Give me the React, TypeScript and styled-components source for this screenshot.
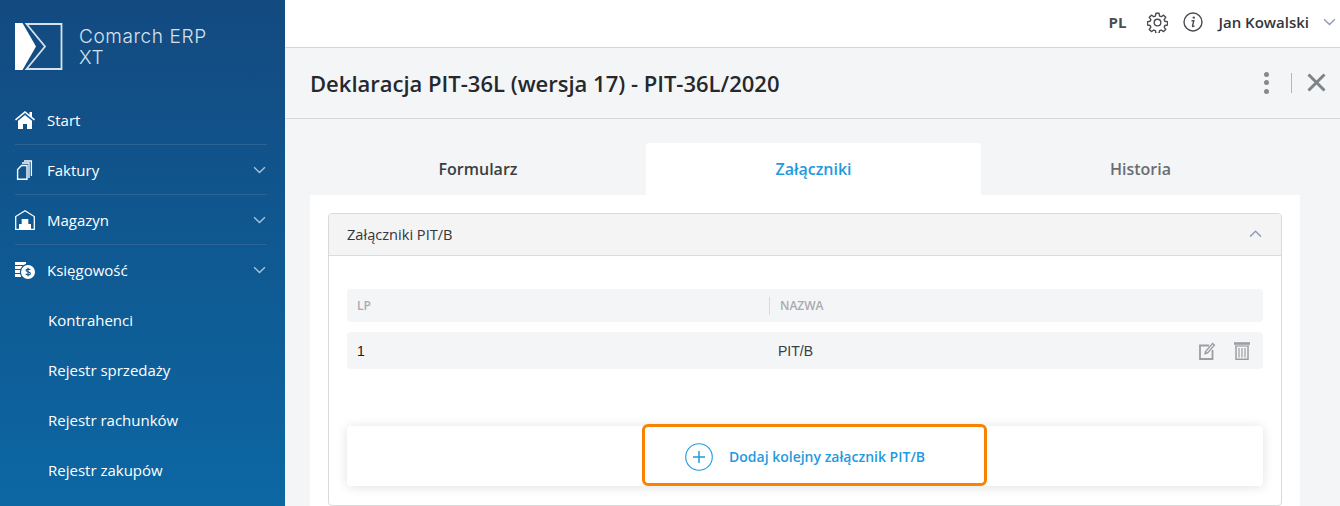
import React from "react";
import styled, { createGlobalStyle } from "styled-components";

const GlobalStyle = createGlobalStyle`
  html, body {
    margin: 0;
    height: 506px;
    overflow: hidden;
    font-family: "Open Sans", "Liberation Sans", sans-serif;
    background: #f4f5f7;
  }
`;

const Shell = styled.div`
  display: flex;
  width: 1340px;
  height: 506px;
  overflow: hidden;
`;

const Sidebar = styled.aside`
  flex: 0 0 285px;
  height: 506px;
  padding: 23px 18px 0 15px;
  box-sizing: border-box;
  background: linear-gradient(180deg, #134a80 0%, #0c67a3 100%);
  color: #fff;
`;

const Brand = styled.div`
  display: flex;
  align-items: center;
  gap: 16px;
  height: 47px;
  margin-bottom: 25px;
`;

const BrandName = styled.div`
  font-family: Inter, "Open Sans", sans-serif;
  font-weight: 300;
  font-size: 19px;
  letter-spacing: 0.6px;
  line-height: 21px;
  color: #d6e2ed;
`;

const MenuItem = styled.div<{ $sub?: boolean; $last?: boolean }>`
  display: flex;
  align-items: center;
  height: 50px;
  box-sizing: border-box;
  padding: 1px 1px 0 ${(p) => (p.$sub ? "33px" : "0")};
  border-bottom: 1px solid ${(p) => (p.$sub || p.$last ? "transparent" : "#2d6496")};
  font-size: 15px;
  color: #fff;
`;

const MenuIcon = styled.span`
  flex: 0 0 32px;
  display: flex;
  align-items: center;
`;

const MenuLabel = styled.span`
  flex: 1;
`;

const Main = styled.main`
  flex: 1;
  min-width: 0;
  display: flex;
  flex-direction: column;
`;

const TopBar = styled.header`
  height: 48px;
  flex: 0 0 48px;
  box-sizing: border-box;
  background: #fff;
  border-bottom: 1px solid #d3d5da;
  display: flex;
  align-items: center;
  justify-content: flex-end;
  padding: 0 4px 3px 0;
`;

const Lang = styled.span`
  font-size: 15px;
  font-weight: 700;
  color: #4a4f57;
  margin-right: 21px;
`;

const TopIcon = styled.span`
  display: flex;
  margin-right: 15px;
`;

const UserName = styled.span`
  font-size: 15px;
  font-weight: 600;
  color: #33363b;
  margin-right: 14px;
`;

const TitleBar = styled.div`
  flex: 0 0 71px;
  box-sizing: border-box;
  display: flex;
  align-items: center;
  padding: 0 14px 1px 25px;
  border-bottom: 1px solid #d8d9dc;
`;

const Title = styled.h1`
  flex: 1;
  margin: 0;
  font-size: 22px;
  font-weight: 600;
  color: #25282c;
`;

const Kebab = styled.span`
  display: flex;
  flex-direction: column;
  gap: 3.5px;
  margin-right: 22px;

  i {
    width: 5px;
    height: 5px;
    border-radius: 50%;
    background: #85888c;
  }
`;

const VLine = styled.span`
  width: 1px;
  height: 20px;
  background: #b5b7ba;
  margin-right: 15px;
`;

const Content = styled.div`
  flex: 1;
  padding: 24px 40px 0 25px;
`;

const Tabs = styled.div`
  display: grid;
  grid-template-columns: 336px 335px 319px;
  height: 52px;
`;

const Tab = styled.div<{ $active?: boolean; $muted?: boolean }>`
  display: flex;
  align-items: center;
  justify-content: center;
  font-size: 16px;
  font-weight: 600;
  color: ${(p) => (p.$active ? "#1f9ade" : p.$muted ? "#6a6d72" : "#3b3e43")};
  background: ${(p) => (p.$active ? "#fff" : "transparent")};
  border-radius: 3px 3px 0 0;
`;

const Panel = styled.section`
  background: #fff;
  padding: 18px 18px 0;
  height: 311px;
  box-sizing: border-box;
`;

const Accordion = styled.div`
  border: 1px solid #d9d9d9;
  border-radius: 4px;
  height: 293px;
  box-sizing: border-box;
`;

const AccordionHead = styled.div`
  height: 42px;
  box-sizing: border-box;
  background: #f4f4f5;
  border-bottom: 1px solid #dcdcdc;
  border-radius: 4px 4px 0 0;
  display: flex;
  align-items: center;
  justify-content: space-between;
  padding: 0 19px 2px 18px;
  font-size: 14.6px;
  color: #33363a;
`;

const AccordionBody = styled.div`
  padding: 33px 18px 0;
`;

const HeadRow = styled.div`
  display: grid;
  grid-template-columns: 422px 1fr;
  align-items: center;
  height: 33px;
  margin-bottom: 10px;
  background: #f4f5f7;
  border-radius: 4px;
  font-size: 12px;
  font-weight: 600;
  color: #a9abae;
`;

const HeadCell = styled.div<{ $divided?: boolean }>`
  padding-left: 10px;
  line-height: 18px;
  border-left: ${(p) => (p.$divided ? "1px solid #d9dadd" : "none")};
`;

const DataRow = styled.div`
  display: grid;
  grid-template-columns: 421px 1fr auto;
  align-items: center;
  height: 37px;
  padding: 0 13px 0 10px;
  background: #f4f5f7;
  border-radius: 4px;
  font-family: "Liberation Sans", Arial, sans-serif;
  font-size: 14px;
  color: #3a3d42;
`;

const Lp = styled.span`
  color: #2e1210;
`;

const RowActions = styled.div`
  display: flex;
  align-items: center;
  gap: 18px;
`;

const AddCard = styled.div`
  display: flex;
  justify-content: center;
  height: 60px;
  margin-top: 57px;
  background: #fff;
  border-radius: 4px;
  box-shadow: 0 1px 12px rgba(0, 0, 0, 0.12);
`;

const AddButton = styled.button`
  position: relative;
  top: -2px;
  width: 345px;
  height: 62px;
  margin-left: 19px;
  box-sizing: border-box;
  display: flex;
  align-items: center;
  gap: 16px;
  padding: 3px 0 0 40px;
  background: #fff;
  border: 3px solid #f98300;
  border-radius: 6px;
  font-family: inherit;
  font-size: 14px;
  font-weight: 600;
  color: #1f9ade;
`;

const Chevron = ({ up, color, size = 13 }: { up?: boolean; color: string; size?: number }) => (
  <svg width={size} height={size * 0.6} viewBox="0 0 12 7" fill="none">
    <path d={up ? "M1 6l5-5 5 5" : "M1 1l5 5 5-5"} stroke={color} strokeWidth="1.3" />
  </svg>
);

const Logo = () => (
  <svg width="48" height="47" viewBox="0 0 48 47">
    <path d="M0 0h7.500L21 23.500 7.500 47H0z" fill="#fff" />
    <path
      d="M11.500 1H46.500V46H11.500L30 23.500z"
      fill="none"
      stroke="#d6e2ed"
      strokeWidth="1.800"
    />
  </svg>
);

const HomeIcon = () => (
  <svg width="20" height="18" viewBox="0 0 20 18" fill="#fff">
    <path d="M10 0L0 8.300l1 1.200L10 2l9 7.500 1-1.200-3-2.500V1h-2.500v2.700z" />
    <path d="M10 4L3 9.800V18h5v-5h4v5h5V9.800z" />
  </svg>
);

const PagesIcon = () => (
  <svg width="18" height="20" viewBox="0 0 18 20" fill="none" stroke="#fff" strokeWidth="1.300">
    <path d="M9 1h7.400v15" />
    <path d="M7 3h7v15" />
    <path d="M6.500 5.500h5.500v13.800H2.600V9.500z" strokeWidth="1.400" />
  </svg>
);

const WarehouseIcon = () => (
  <svg width="20" height="20" viewBox="0 0 20 20" fill="none">
    <path d="M0.700 19.300V6.500L10 0.800l9.300 5.700v12.800z" stroke="#fff" strokeWidth="1.300" />
    <path d="M4 19v-5h2.700V9h6.600v5H16v5z" fill="#fff" />
  </svg>
);

const MoneyIcon = () => (
  <svg width="20" height="18" viewBox="0 0 20 18" fill="#fff">
    <rect x="0" y="1" width="11" height="3" />
    <rect x="0" y="5" width="15" height="3" />
    <rect x="0" y="9" width="6" height="3" />
    <rect x="0" y="13" width="6" height="3" />
    <circle cx="13" cy="11" r="8.200" fill="#0f5a93" />
    <circle cx="13" cy="11" r="7" />
    <path
      d="M15.300 8.800c-.5-.8-3.900-1.300-4.300.4-.4 1.900 4.700 1.400 4.400 3.500-.3 1.700-3.900 1.300-4.700.2M13 6.700v8.600"
      stroke="#0f5a93"
      strokeWidth="1.200"
      fill="none"
    />
  </svg>
);

const GearIcon = () => (
  <svg width="21" height="21" viewBox="0 0 24 24" fill="none" stroke="#4a4c50" strokeWidth="1.600">
    <circle cx="12" cy="12" r="3.800" />
    <path d="M10.200 1.500h3.600l.6 3.100 1.900.8 2.600-1.800 2.500 2.500-1.800 2.600.8 1.900 3.100.6v3.600l-3.100.6-.8 1.900 1.800 2.600-2.500 2.500-2.600-1.800-1.900.8-.6 3.100h-3.600l-.6-3.100-1.900-.8-2.600 1.800-2.500-2.500 1.800-2.600-.8-1.900-3.100-.6v-3.600l3.100-.6.8-1.900-1.800-2.600 2.500-2.500 2.600 1.800 1.900-.8z" strokeLinejoin="round" />
  </svg>
);

const InfoIcon = () => (
  <svg width="20" height="20" viewBox="0 0 20 20" fill="none">
    <circle cx="10" cy="10" r="9" stroke="#4a4c50" strokeWidth="1.400" />
    <circle cx="10.800" cy="5.600" r="1.200" fill="#4a4c50" />
    <path d="M8.500 8.700h2.300L9.500 14c-.1.700.9.700 2-.2" stroke="#4a4c50" strokeWidth="1.400" fill="none" />
  </svg>
);

const CloseIcon = () => (
  <svg width="19" height="19" viewBox="0 0 19 19">
    <path d="M1.500 1.500l16 16M17.500 1.500l-16 16" stroke="#7f8286" strokeWidth="3" />
  </svg>
);

const EditIcon = () => (
  <svg width="17" height="18" viewBox="0 0 17 18" fill="none">
    <path d="M10 3.500H1v13.500h12.500V8" stroke="#9c9ea1" strokeWidth="1.800" />
    <path d="M5 12.800l1-3.600L13.400.600l3 2.400-7.400 8.600z" fill="#9c9ea1" />
    <path d="M7.300 9.800l6.300-7.200.8.700-6.300 7.200z" fill="#f4f5f7" />
  </svg>
);

const TrashIcon = () => (
  <svg width="16" height="18" viewBox="0 0 16 18" fill="none" stroke="#9c9ea1">
    <path d="M0 1.500h16" strokeWidth="2.600" />
    <path d="M1 4h14" strokeWidth="1.200" />
    <path d="M2 4v13.300h12V4" strokeWidth="1.500" />
    <path d="M5 6v9.500M8 6v9.500M11 6v9.500" strokeWidth="1.200" />
  </svg>
);

const PlusIcon = () => (
  <svg width="28" height="28" viewBox="0 0 28 28" fill="none" stroke="#1f9ade">
    <circle cx="14" cy="14" r="13.300" strokeWidth="1.100" />
    <path d="M14 8v12M8 14h12" strokeWidth="1.500" />
  </svg>
);

const mainMenu = [
  { label: "Start", icon: <HomeIcon /> },
  { label: "Faktury", icon: <PagesIcon />, more: true },
  { label: "Magazyn", icon: <WarehouseIcon />, more: true },
  { label: "Księgowość", icon: <MoneyIcon />, more: true, last: true },
];

const subMenu = ["Kontrahenci", "Rejestr sprzedaży", "Rejestr rachunków", "Rejestr zakupów"];

export default function App() {
  return (
    <Shell>
      <GlobalStyle />
      <Sidebar>
        <Brand>
          <Logo />
          <BrandName>
            Comarch ERP
            <br />
            XT
          </BrandName>
        </Brand>
        {mainMenu.map((item) => (
          <MenuItem key={item.label} $last={item.last}>
            <MenuIcon>{item.icon}</MenuIcon>
            <MenuLabel>{item.label}</MenuLabel>
            {item.more && <Chevron color="#a9c3da" />}
          </MenuItem>
        ))}
        {subMenu.map((label) => (
          <MenuItem key={label} $sub>
            <MenuLabel>{label}</MenuLabel>
          </MenuItem>
        ))}
      </Sidebar>
      <Main>
        <TopBar>
          <Lang>PL</Lang>
          <TopIcon>
            <GearIcon />
          </TopIcon>
          <TopIcon>
            <InfoIcon />
          </TopIcon>
          <UserName>Jan Kowalski</UserName>
          <Chevron color="#8f9ab8" />
        </TopBar>
        <TitleBar>
          <Title>Deklaracja PIT-36L (wersja 17) - PIT-36L/2020</Title>
          <Kebab>
            <i />
            <i />
            <i />
          </Kebab>
          <VLine />
          <CloseIcon />
        </TitleBar>
        <Content>
          <Tabs>
            <Tab>Formularz</Tab>
            <Tab $active>Załączniki</Tab>
            <Tab $muted>Historia</Tab>
          </Tabs>
          <Panel>
            <Accordion>
              <AccordionHead>
                Załączniki PIT/B
                <Chevron up color="#8f9ab8" />
              </AccordionHead>
              <AccordionBody>
                <HeadRow>
                  <HeadCell>LP</HeadCell>
                  <HeadCell $divided>NAZWA</HeadCell>
                </HeadRow>
                <DataRow>
                  <Lp>1</Lp>
                  <span>PIT/B</span>
                  <RowActions>
                    <EditIcon />
                    <TrashIcon />
                  </RowActions>
                </DataRow>
                <AddCard>
                  <AddButton type="button">
                    <PlusIcon />
                    Dodaj kolejny załącznik PIT/B
                  </AddButton>
                </AddCard>
              </AccordionBody>
            </Accordion>
          </Panel>
        </Content>
      </Main>
    </Shell>
  );
}
